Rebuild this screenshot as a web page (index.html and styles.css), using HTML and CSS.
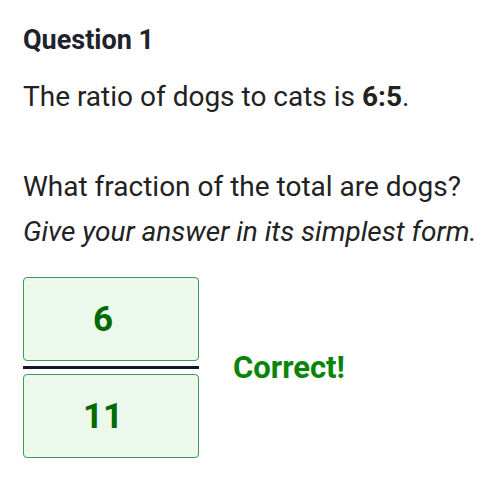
FILE: index.html
```html
<!DOCTYPE html>
<html lang="en">
<head>
  <meta charset="UTF-8">
  <title>Question 1</title>
  <link rel="stylesheet" href="styles.css">
</head>
<body>
  <main class="question">
    <h2 class="question-title">Question 1</h2>
    <p class="ratio">The ratio of dogs to cats is <strong>6:5</strong>.</p>
    <p class="prompt">What fraction of the total are dogs?</p>
    <p class="hint">Give your answer in its simplest form.</p>
    <div class="answer-row">
      <div class="fraction">
        <div class="frac-box">6</div>
        <div class="frac-line"></div>
        <div class="frac-box">11</div>
      </div>
      <div class="feedback">Correct!</div>
    </div>
  </main>
</body>
</html>
```

FILE: styles.css
```css
body {
  margin: 0;
  padding: 0;
  background: #fff;
  color: #222;
  font-family: Roboto, 'Liberation Sans', sans-serif;
}
.question {
  padding: 23px 23px;
}
.question-title {
  font-size: 27px;
  font-weight: 700;
  margin: 0 0 23px;
  line-height: 34px;
  color: #1e222b;
}
.ratio {
  font-size: 28px;
  margin: 0 0 56px;
  line-height: 34px;
}
.prompt, .hint {
  font-size: 28px;
  margin: 0;
  line-height: 34px;
}
.prompt {
  margin-bottom: 11px;
}
.hint {
  font-style: italic;
}
.answer-row {
  display: flex;
  align-items: center;
  margin-top: 28px;
}
.fraction {
  display: flex;
  flex-direction: column;
  width: 176px;
}
.frac-box {
  box-sizing: border-box;
  height: 84px;
  padding-right: 16px;
  border: 1px solid #3a9a5c;
  border-radius: 4px;
  background: #ebf8eb;
  color: #006a00;
  font-size: 35px;
  font-weight: 700;
  display: flex;
  align-items: center;
  justify-content: center;
}
.frac-line {
  height: 3px;
  margin: 5px 0;
  background: #111827;
}
.feedback {
  margin-left: 34px;
  color: #088508;
  font-size: 31px;
  font-weight: 700;
}
```
